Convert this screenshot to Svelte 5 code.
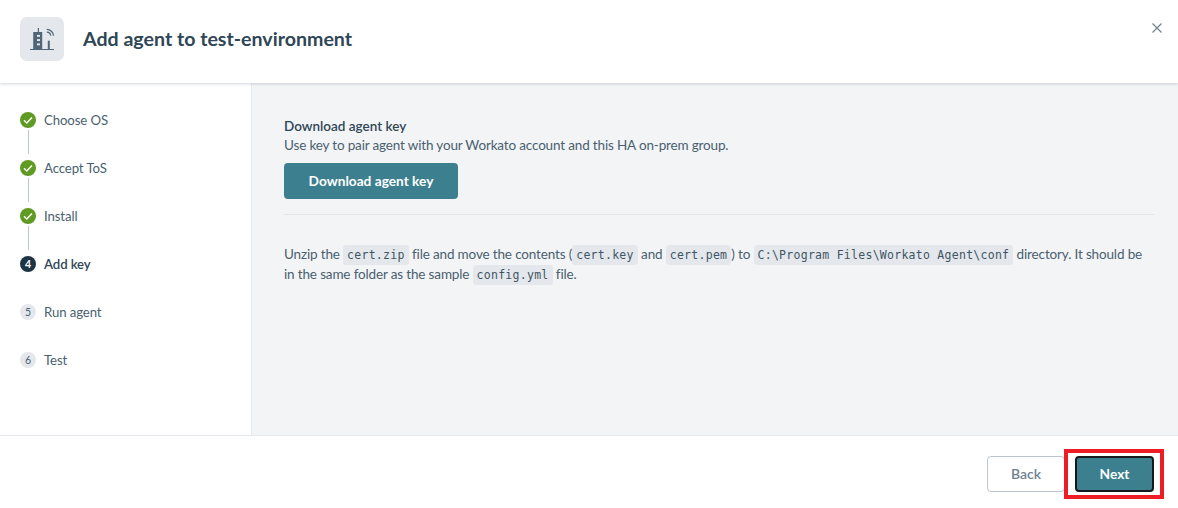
<script>
  const steps = [
    { label: "Choose OS", state: "done" },
    { label: "Accept ToS", state: "done" },
    { label: "Install", state: "done" },
    { label: "Add key", state: "current", n: 4 },
    { label: "Run agent", state: "todo", n: 5 },
    { label: "Test", state: "todo", n: 6 },
  ];
</script>

<div class="dialog">
  <header>
    <div class="badge">
      <svg width="24" height="24" viewBox="0 0 24 24" aria-hidden="true">
        <path d="M0 22.5h24" stroke="#4f6678" stroke-width="1" fill="none" />
        <path d="M3.2 22V5h4.6V1h1.2v4h3.2v17Z" fill="#4f6678" />
        <rect x="7" y="7.9" width="3" height="1.9" fill="#e4e7eb" />
        <rect x="7" y="12.1" width="3" height="1.9" fill="#e4e7eb" />
        <rect x="7" y="16.4" width="3" height="1.9" fill="#e4e7eb" />
        <path d="M17.8 22v-8.3h2V22Z" fill="#4f6678" />
        <path d="M16.8 5.2a4 4 0 0 1 3.9 3.6M16.8 2.4a6.8 6.8 0 0 1 6.7 6.4" stroke="#4f6678" stroke-width="1.2" fill="none" />
      </svg>
    </div>
    <h1>Add agent to test-environment</h1>
    <svg class="close" width="12" height="12" viewBox="0 0 12 12" aria-hidden="true">
      <path d="M1.5 1.5l9 9M10.5 1.5l-9 9" stroke="#6f8291" stroke-width="1.2" fill="none" />
    </svg>
  </header>

  <div class="body">
    <nav>
      {#each steps as step, i}
        <div class="step {step.state}">
          <span class="dot">
            {#if step.state === "done"}
              <svg width="16" height="16" viewBox="0 0 16 16" aria-hidden="true">
                <path d="M4 8.3l2.7 2.6L12 5.4" stroke="#fff" stroke-width="1.4" fill="none" />
              </svg>
            {:else}
              {step.n}
            {/if}
          </span>
          <span class="label">{step.label}</span>
          {#if i < 3}<span class="line"></span>{/if}
        </div>
      {/each}
    </nav>

    <main>
      <h2>Download agent key</h2>
      <p class="lead">Use key to pair agent with your Workato account and this HA on-prem group.</p>
      <button class="primary download">Download agent key</button>
      <hr />
      <p class="text">
        Unzip the <code>cert.zip</code> file and move the contents (<code>cert.key</code> and <code>cert.pem</code>) to <code>C:\Program Files\Workato Agent\conf</code> directory. It should be in the same folder as the sample <code>config.yml</code> file.
      </p>
    </main>
  </div>

  <footer>
    <button class="back">Back</button>
    <button class="primary next">Next</button>
    <span class="highlight"></span>
  </footer>
</div>

<style>
  :global(body) { background: #fff; }
  .dialog { display: flex; flex-direction: column; width: 1178px; height: 508px; overflow: hidden; color: #2f4656; font-family: Lato, "Open Sans", sans-serif; font-size: 14px; }

  header { position: relative; z-index: 1; display: flex; flex: 0 0 83px; align-items: center; gap: 19px; box-sizing: border-box; padding: 0 20px 5px; background: #fff; box-shadow: 0 1px 3px rgba(30, 50, 65, .2); }
  .badge { display: flex; flex: 0 0 44px; align-items: center; justify-content: center; height: 44px; border-radius: 7px; background: #e4e7eb; }
  h1 { margin: -2px 0 0; color: #2f4656; font-size: 19.6px; font-weight: 700; }
  .close { position: absolute; top: 22px; right: 15px; }

  .body { display: flex; flex: 1; min-height: 0; }
  nav { flex: 0 0 252px; box-sizing: border-box; padding: 25px 0 0 20px; background: #fff; border-right: 1px solid #e4e7eb; }
  .step { position: relative; display: flex; align-items: center; gap: 8px; height: 24px; margin-bottom: 24px; color: #4a5f6f; font-size: 13.2px; letter-spacing: -.1px; }
  .dot { display: flex; flex: 0 0 16px; align-items: center; justify-content: center; height: 16px; border-radius: 50%; font-size: 10.5px; font-weight: 700; }
  .done .dot { background: #5f9b22; }
  .current .dot { background: #1d3444; color: #fff; }
  .todo .dot { background: #e4e7eb; color: #4a5f6f; font-weight: 400; }
  .current .label { color: #2f4656; font-weight: 600; }
  .line { position: absolute; top: 22px; left: 8px; width: 1px; height: 24px; background: #bcc5cd; }

  main { flex: 1; padding: 34px 24px 0 32px; background: #f3f4f6; }
  h2 { margin: 0; color: #2f4656; font-size: 13.5px; font-weight: 600; line-height: 18px; }
  .lead { margin: 1px 0 9px; color: #4a5f6f; font-size: 13.5px; letter-spacing: -.16px; line-height: 18px; }
  .primary { padding: 0 0 2px; border: 0; border-radius: 4px; background: #3c7f8f; color: #fff; font: inherit; font-size: 13.7px; font-weight: 700; }
  .download { display: block; width: 174px; height: 36px; }
  hr { height: 1px; margin: 15px 0 29px; border: 0; background: #e2e5e9; }
  .text { margin: 0; color: #4a5f6f; font-size: 13.5px; letter-spacing: -.15px; line-height: 20px; }
  code { padding: 3px 4px; border-radius: 3px; background: #e4e7eb; color: #3f5565; font-family: "DejaVu Sans Mono", monospace; font-size: 11.5px; letter-spacing: .27px; line-height: 1; }

  footer { position: relative; display: flex; flex: 0 0 73px; align-items: flex-start; justify-content: flex-end; gap: 10px; box-sizing: border-box; padding: 20px 24px 0 0; background: #fff; border-top: 1px solid #e4e7eb; }
  .back, .next { width: 79px; height: 36px; }
  .back { width: 78px; padding: 0 0 2px; border: 1px solid #bcc5cd; border-radius: 4px; background: #fff; color: #6f8291; font: inherit; font-size: 14px; font-weight: 600; }
  .next { border: 2px solid #15191c; }
  .highlight { position: absolute; top: 13px; right: 14px; width: 100px; height: 50px; box-sizing: border-box; border: 4px solid #ee1c25; }
</style>
